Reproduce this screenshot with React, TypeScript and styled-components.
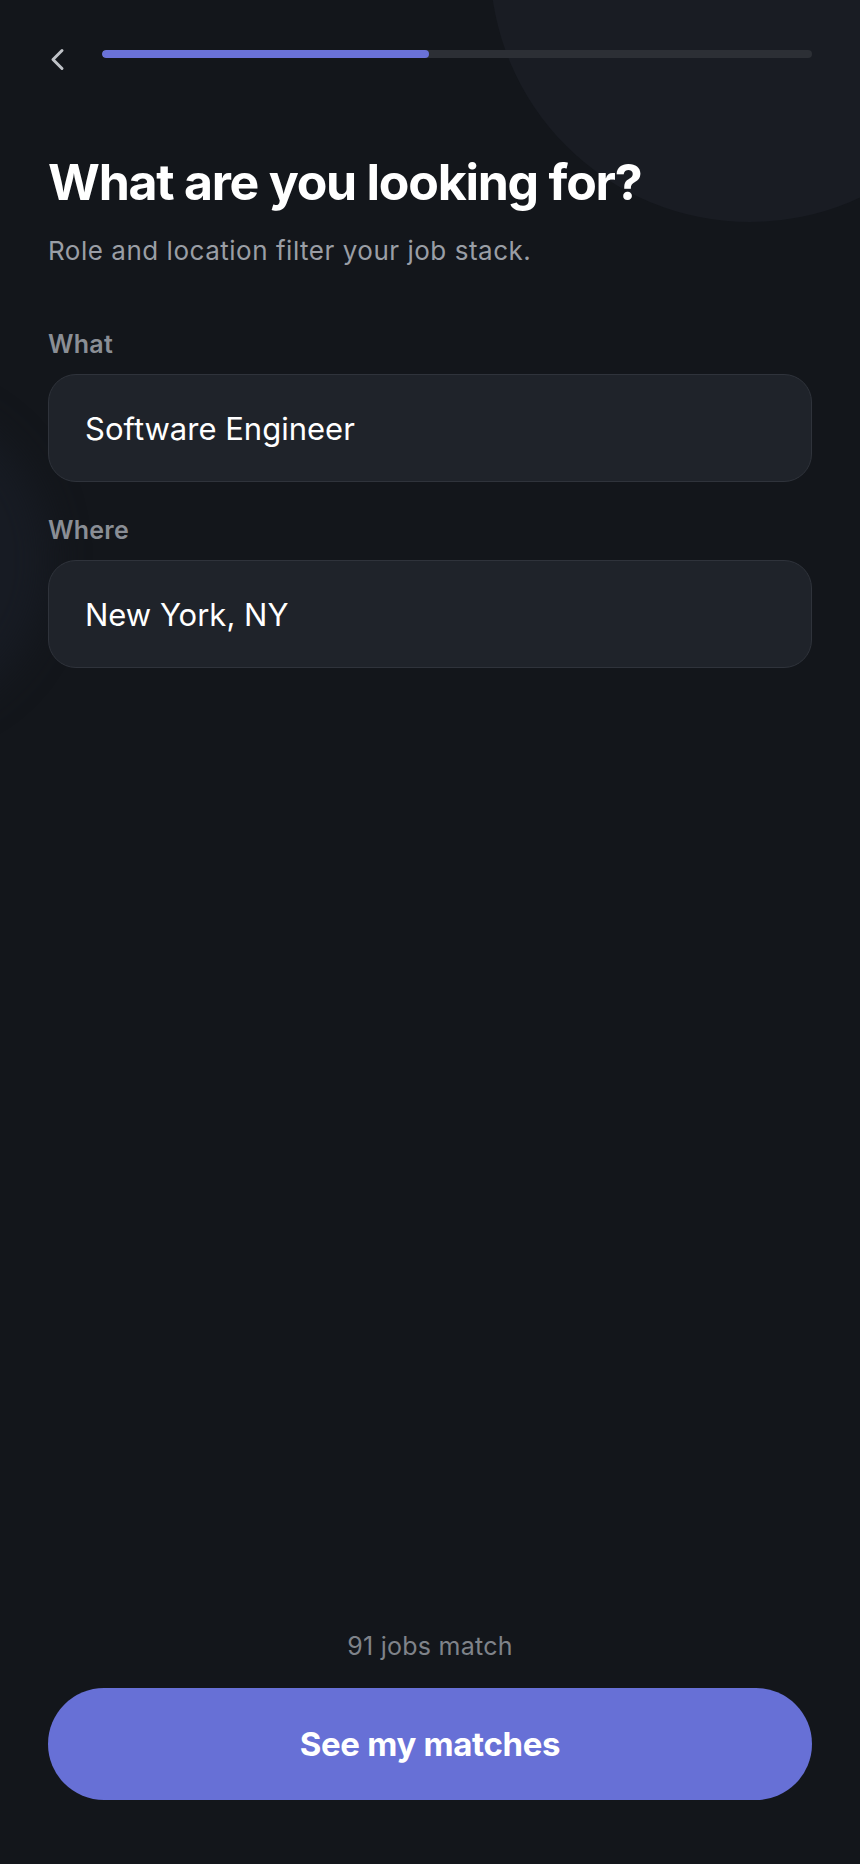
import React from "react";
import styled, { createGlobalStyle } from "styled-components";

const GlobalStyle = createGlobalStyle`
  * { box-sizing: border-box; }
  html, body { margin: 0; padding: 0; background: #13161b; }
  body { font-family: Inter, "Noto Sans", "Liberation Sans", sans-serif; -webkit-font-smoothing: antialiased; }
`;

const Screen = styled.div`
  position: relative;
  width: 860px;
  min-height: 1864px;
  background: #13161b;
  overflow: hidden;
  display: flex;
  flex-direction: column;
  padding: 48px 48px 64px 48px;
`;

const Glow = styled.div<{ $x: number; $y: number; $r: number; $c: string; $blur?: number }>`
  position: absolute;
  left: ${(p) => p.$x - p.$r}px;
  top: ${(p) => p.$y - p.$r}px;
  width: ${(p) => p.$r * 2}px;
  height: ${(p) => p.$r * 2}px;
  border-radius: 50%;
  background: ${(p) => p.$c};
  filter: ${(p) => (p.$blur ? `blur(${p.$blur}px)` : "none")};
  pointer-events: none;
`;

const Content = styled.div`
  position: relative;
  display: flex;
  flex-direction: column;
  flex: 1;
`;

const Header = styled.div`
  display: flex;
  align-items: flex-start;
  gap: 37px;
`;

const BackButton = styled.button`
  display: flex;
  padding: 0;
  margin: 0 0 0 1px;
  border: none;
  background: none;
  cursor: pointer;
  width: 16px;
  height: 24px;
`;

const Track = styled.div`
  flex: 1;
  height: 8px;
  margin-top: 2px;
  border-radius: 4px;
  background: #2c2f35;
  overflow: hidden;
`;

const Fill = styled.div`
  height: 100%;
  border-radius: 4px;
  background: #6a72d8;
`;

const Title = styled.h1`
  margin: 80px 0 0 0;
  font-size: 50px;
  line-height: 60px;
  font-weight: 700;
  letter-spacing: -0.025em;
  color: #ffffff;
`;

const Subtitle = styled.p`
  margin: 23px 0 0 0;
  font-size: 26px;
  line-height: 32px;
  color: #9a9ea5;
  letter-spacing: 0.02em;
`;

const Field = styled.div<{ $top: number }>`
  display: flex;
  flex-direction: column;
  gap: 15px;
  margin-top: ${(p) => p.$top}px;
`;

const Label = styled.label`
  font-size: 25px;
  line-height: 30px;
  font-weight: 600;
  color: #8a8e95;
  letter-spacing: 0.01em;
`;

const Input = styled.div`
  height: 108px;
  border-radius: 28px;
  background: #1f232a;
  border: 1.5px solid #2f333b;
  display: flex;
  align-items: center;
  padding: 0 36px;
  font-size: 31px;
  font-weight: 400;
  color: #ffffff;
`;

const Footer = styled.div`
  margin-top: auto;
  display: flex;
  flex-direction: column;
  align-items: center;
  gap: 27px;
`;

const MatchCount = styled.div`
  font-size: 25px;
  line-height: 30px;
  color: #7f838a;
  letter-spacing: 0.01em;
`;

const PrimaryButton = styled.button`
  width: 100%;
  height: 112px;
  border: none;
  border-radius: 56px;
  background: #6770d6;
  color: #ffffff;
  font-family: inherit;
  font-size: 33px;
  font-weight: 700;
  letter-spacing: -0.01em;
  cursor: pointer;
`;

export default function App() {
  const progress = 46;
  return (
    <>
      <GlobalStyle />
      <Screen>
        <Glow $x={750} $y={-38} $r={260} $c="#191c23" />
        <Glow $x={-110} $y={560} $r={160} $c="#171b23" $blur={18} />
        <Content>
          <Header>
            <BackButton aria-label="Back">
              <svg width="16" height="24" viewBox="0 0 16 24" fill="none">
                <path d="M13 2.5 L4 11.5 L13 20.5" stroke="#bfc2c7" strokeWidth="3" strokeLinecap="round" strokeLinejoin="round" />
              </svg>
            </BackButton>
            <Track>
              <Fill style={{ width: `${progress}%` }} />
            </Track>
          </Header>
          <Title>What are you looking for?</Title>
          <Subtitle>Role and location filter your job stack.</Subtitle>
          <Field $top={62}>
            <Label>What</Label>
            <Input>Software Engineer</Input>
          </Field>
          <Field $top={33}>
            <Label>Where</Label>
            <Input>New York, NY</Input>
          </Field>
          <Footer>
            <MatchCount>91 jobs match</MatchCount>
            <PrimaryButton>See my matches</PrimaryButton>
          </Footer>
        </Content>
      </Screen>
    </>
  );
}
